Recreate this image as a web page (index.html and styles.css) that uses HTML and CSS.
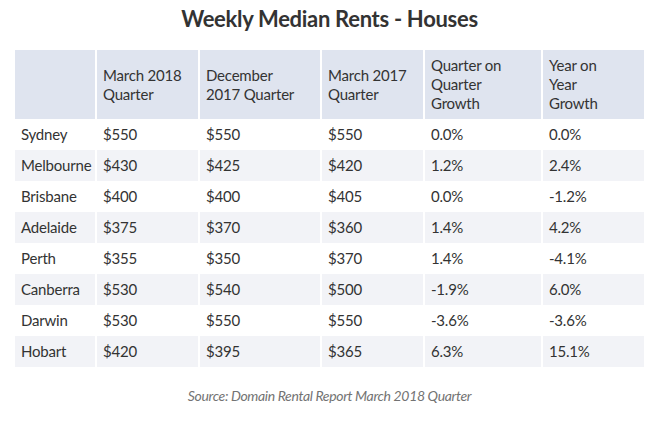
FILE: index.html
```html
<!DOCTYPE html>
<html lang="en">
<head>
<meta charset="utf-8">
<title>Weekly Median Rents - Houses</title>
<link rel="stylesheet" href="styles.css">
</head>
<body>
<div class="page">
  <h1 class="title">Weekly Median Rents - Houses</h1>
  <table class="rents">
    <colgroup>
      <col class="c1"><col class="c2"><col class="c3"><col class="c4"><col class="c5"><col class="c6">
    </colgroup>
    <thead>
      <tr>
        <th></th>
        <th>March 2018<br>Quarter</th>
        <th>December<br>2017 Quarter</th>
        <th>March 2017<br>Quarter</th>
        <th>Quarter on<br>Quarter<br>Growth</th>
        <th>Year on<br>Year<br>Growth</th>
      </tr>
    </thead>
    <tbody>
      <tr><td>Sydney</td><td>$550</td><td>$550</td><td>$550</td><td>0.0%</td><td>0.0%</td></tr>
      <tr><td>Melbourne</td><td>$430</td><td>$425</td><td>$420</td><td>1.2%</td><td>2.4%</td></tr>
      <tr><td>Brisbane</td><td>$400</td><td>$400</td><td>$405</td><td>0.0%</td><td>-1.2%</td></tr>
      <tr><td>Adelaide</td><td>$375</td><td>$370</td><td>$360</td><td>1.4%</td><td>4.2%</td></tr>
      <tr><td>Perth</td><td>$355</td><td>$350</td><td>$370</td><td>1.4%</td><td>-4.1%</td></tr>
      <tr><td>Canberra</td><td>$530</td><td>$540</td><td>$500</td><td>-1.9%</td><td>6.0%</td></tr>
      <tr><td>Darwin</td><td>$530</td><td>$550</td><td>$550</td><td>-3.6%</td><td>-3.6%</td></tr>
      <tr><td>Hobart</td><td>$420</td><td>$395</td><td>$365</td><td>6.3%</td><td>15.1%</td></tr>
    </tbody>
  </table>
  <p class="source">Source: Domain Rental Report March 2018 Quarter</p>
</div>
</body>
</html>
```
FILE: styles.css
```css
body {
  margin: 0;
  background: #fff;
  font-family: Lato, "Noto Sans", sans-serif;
  color: #333;
}
.page {
  width: 629px;
  margin: 0 auto 0 15px;
}
.title {
  margin: 5px 0 17px;
  font-size: 22px;
  line-height: 28px;
  font-weight: 700;
  letter-spacing: -0.3px;
  text-align: center;
  color: #333;
}
.rents {
  width: 629px;
  table-layout: fixed;
  border-collapse: separate;
  border-spacing: 0;
  font-size: 15px;
  line-height: 19px;
  letter-spacing: -0.2px;
}
.c1 { width: 82px; }
.c2 { width: 103px; }
.c3 { width: 122px; }
.c4 { width: 103px; }
.c5 { width: 118px; }
.c6 { width: 101px; }
.rents th,
.rents td {
  box-sizing: border-box;
  padding: 6px 6px;
  text-align: left;
  vertical-align: middle;
  border-right: 2px solid #fff;
  font-weight: 400;
  white-space: nowrap;
}
.rents th:last-child,
.rents td:last-child {
  border-right: 0;
}
.rents thead th {
  background: #dfe4ef;
  height: 69px;
}
.rents tbody td {
  height: 31px;
}
.rents tbody tr:nth-child(even) td {
  background: #f2f3f7;
}
.source {
  margin: 19px 0 0;
  font-size: 14px;
  line-height: 20px;
  font-style: italic;
  letter-spacing: -0.35px;
  color: #737373;
  text-align: center;
}
```
